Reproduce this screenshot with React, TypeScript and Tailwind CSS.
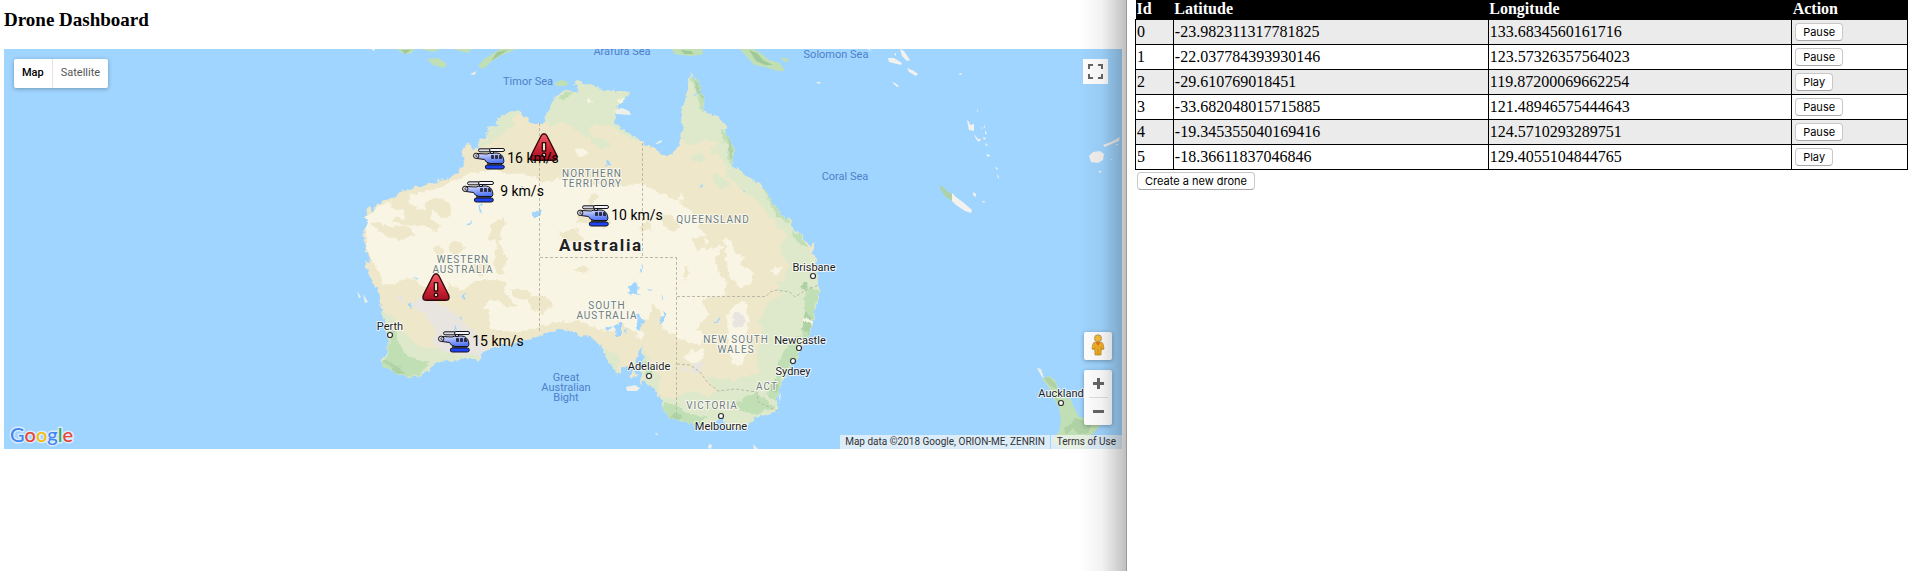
import React from "react";

const LAND =
  "M367 250L363 237L365 229L367 222L366 213L370 206L372 212L377 205L387 200L400 192L418 187L430 183L447 179L457 173L465 163L462 155L464 147L469 142L472 148L477 150L479 145L478 140L487 137L488 128L498 125L497 120L507 113L515 110L522 113L530 122L535 123L545 123L545 118L550 108L553 103L558 95L567 90L579 92L574 82L580 81L587 84L600 88L613 92L625 90L629 93L623 101L618 105L617 115L613 122L627 132L643 143L655 148L665 155L672 155L677 148L681 138L683 127L682 112L684 100L688 90L688 82L692 74L697 80L700 88L704 100L706 112L708 116L715 115L722 120L725 124L727 135L733 147L734 157L733 166L743 173L753 180L763 187L767 193L773 203L780 212L788 220L793 228L803 237L811 246L815 242L813 252L816 262L817 273L819 285L819 297L815 310L812 327L807 337L802 347L795 360L788 373L780 383L778 397L778 411L767 414L753 418L747 426L737 429L725 427L720 422L713 423L707 431L693 424L680 421L670 418L663 412L662 400L655 390L648 383L643 380L640 385L641 373L644 357L641 345L638 357L633 366L638 376L630 379L633 368L622 367L617 375L612 365L605 355L600 345L590 337L580 336L577 333L563 329L550 332L537 337L517 343L493 348L483 352L478 360L463 360L450 361L437 362L430 368L420 375L410 377L397 374L382 365L382 358L387 355L388 343L385 327L382 313L378 293L370 277L364 262L371 263Z";

type Patch = { fill: string; d: string };

const PATCHES: Patch[] = [
  { fill: "#f9f5e5", d: "M366 246L366 216L380 206L405 196L440 188L466 174L493 169L505 173L525 174L545 183L556 179L575 178L593 184L623 187L640 183L657 192L675 200L690 210L700 227L708 240L705 250L723 246L715 260L720 275L727 283L724 295L713 320L706 332L700 345L690 342L677 337L663 330L657 310L650 315L642 340L627 333L600 330L580 320L555 323L530 329L510 333L492 328L488 310L477 303L450 300L432 290L417 282L407 277L393 284L384 285L373 262Z" },
  { fill: "#f9f5e5", d: "M576 147L584 149L588 153L582 157L577 155ZM676 198L681 193L684 198L678 202ZM724 240L728 237L733 245L736 259L744 267L754 272L752 284L740 287L729 275ZM727 314L740 300L748 305L749 321L745 335L748 350L742 365L732 364L728 347ZM703 262L709 255L716 262L713 270ZM693 350L704 350L702 360L690 365L684 357Z" },
  { fill: "#efe7c9", d: "M389 204L400 195L412 195L407 201L415 207L427 209L424 202L436 198L448 200L452 207L451 216L442 218L433 210L430 219L441 226L437 232L424 225L411 227L399 223L390 220L399 217L405 219L404 211L394 210ZM490 224L498 219L507 221L502 231L499 243L489 238ZM452 241L460 243L465 249L458 254L448 250ZM495 240L504 249L507 260L502 268L505 273L499 275L493 264L496 254ZM370 223L378 222L393 228L404 226L416 233L402 240L386 236L376 229Z" },
  { fill: "#efe7c9", d: "M432 248L440 244L445 252L437 257ZM448 283L462 290L475 282L490 279L507 282L503 290L508 298L518 305L508 309L499 300L489 302L478 309L467 302L456 304L447 297ZM472 266L482 262L490 265L487 273L477 276ZM510 291L524 288L533 295L526 300L515 298ZM528 298L546 295L553 306L544 314L531 309ZM574 323L600 333L630 339L615 337L590 326ZM588 198L595 193L598 197L592 203L601 209L592 212L584 208L579 213L577 222L591 224L604 227L612 223L601 216ZM560 233L576 229L585 239L574 243L563 240Z" },
  { fill: "#efe7c9", d: "M640 322L649 318L652 305L659 308L661 322L663 338L672 345L668 360L659 372L646 360L645 342ZM683 276L686 265L689 272L686 281ZM692 238L704 236L706 246L697 252ZM641 225L650 221L652 229L643 232ZM618 322L637 332L635 346L625 341ZM661 214L672 217L680 227L674 233L664 225ZM700 300L723 295L718 320L706 337L697 328L709 315ZM573 270L583 265L590 269L584 274Z" },
  { fill: "#e8e4e0", d: "M398 297L403 295L404 302L400 303ZM413 303L423 297L434 299L438 305L447 308L457 315L464 325L474 330L484 344L490 352L478 359L466 354L451 355L440 349L432 340L437 331L428 321L424 313L414 309ZM731 315L740 311L745 317L744 328L734 326ZM692 365L703 362L702 371L693 373ZM680 367L688 368L685 373Z" },
  { fill: "#dee9cb", d: "M545 123L545 90L574 78L632 86L633 101L614 111L619 123L632 135L643 143L630 139L612 127L598 125L588 127L593 135L587 138L574 129L562 121L552 126ZM487 140L484 130L508 108L521 111L513 119L514 126L500 136L489 141ZM590 137L605 138L611 147L601 149L593 144ZM470 151L479 143L490 138L491 144L480 147Z" },
  { fill: "#dee9cb", d: "M682 139L681 80L695 70L705 112L722 118L731 150L737 175L725 164L716 150L718 143L704 139L692 146L684 143ZM723 169L740 170L755 181L763 190L776 206L788 221L806 237L821 285L812 330L790 370L780 410L760 414L741 400L714 389L706 376L720 380L740 379L759 372L757 352L763 334L758 320L766 307L775 299L788 293L785 278L789 266L780 248L786 235L768 215L758 202L745 192L735 184ZM661 397L676 398L690 390L710 396L716 390L740 397L770 394L780 412L750 430L700 432L665 420ZM640 353L646 352L652 365L660 378L657 392L643 379ZM601 347L612 353L620 357L617 374L608 363ZM381 311L391 314L399 327L410 338L420 349L437 348L451 355L478 354L480 359L451 363L427 374L400 379L378 369L390 345Z" },
  { fill: "#dee9cb", d: "M712 174L724 177L731 185L721 190L714 183ZM691 157L702 153L706 159L697 163ZM767 303L778 297L778 307ZM776 282L788 279L790 291L778 294ZM710 148L719 151L713 157Z" },
  { fill: "#c0dfb4", d: "M389 330L397 331L400 348L410 357L430 362L419 375L399 378L381 365L388 356ZM690 76L697 76L704 96L705 112L700 107L697 94ZM721 128L730 137L734 151L733 165L727 160L728 145L722 140ZM761 184L769 190L774 205L784 211L789 225L779 216L773 208ZM791 231L800 235L810 248L802 245L795 239ZM804 295L810 287L819 291L814 312L811 329L805 339L801 334L806 319ZM789 341L801 336L796 359L781 380L777 401L767 397L771 383L781 376L779 361ZM665 401L678 405L683 412L706 417L700 428L669 420L661 407ZM735 403L745 398L757 392L768 401L776 408L755 414L741 411ZM557 100L565 93L575 90L565 99ZM643 361L650 366L653 379L647 377Z" },
  { fill: "#aed2a5", d: "M727 137L731 145L733 161L730 158ZM804 310L812 317L808 335L803 328ZM769 387L777 379L777 391L772 392ZM384 360L397 365L405 374L396 373ZM694 78L701 90L703 102L697 90ZM801 285L808 281L807 292ZM676 411L682 415L680 420L672 418Z" },
  { fill: "#f9f5e5", d: "M616 100L624 98L628 106L619 107ZM585 101L590 98L592 102L588 105ZM803 317L814 322L811 325L804 320ZM735 254L743 255L740 262L735 260ZM770 270L782 265L783 269L774 275Z" },
];

const LAKES =
  "M630 284L634 281L638 285L637 293L640 296L630 294L629 289ZM636 315L640 313L643 325L641 332L637 328ZM660 317L665 312L665 320L661 324ZM614 327L621 323L621 338L616 335ZM605 328L612 326L608 331ZM623 330L628 329L626 334ZM713 323L722 316L716 323ZM532 214L541 209L541 216L535 216ZM604 167L609 160L610 167ZM462 297L466 294L466 300ZM458 317L462 316L460 320ZM480 204L482 210L480 214L479 208ZM467 223L470 221L469 226ZM408 303L411 301L410 310L408 309ZM412 278L417 279L416 281ZM455 325L458 329L454 330ZM641 264L643 268L641 272ZM649 291L653 289L651 292ZM699 186L702 183L701 188ZM661 297L663 298L663 301ZM520 184L523 186L520 187ZM563 240L565 242L563 243ZM716 420L723 418L725 424L718 425ZM694 94L697 94L695 96ZM744 190L746 192L743 192Z";

const ISLANDS: Patch[] = [
  { fill: "#c0dfb4", d: "M397 49L415 49L410 54L402 53ZM420 49L440 49L433 52ZM427 59L438 58L447 64L444 68L433 65ZM478 66L484 59L497 51L500 49L517 49L500 56L491 62L483 69ZM554 83L562 80L568 82L566 86L557 86ZM671 49L702 49L703 54L693 56L680 55L675 54Z" },
  { fill: "#c0dfb4", d: "M740 49L754 49L762 54L769 60L780 63L785 71L777 71L765 67L754 65L748 58ZM452 49L472 49L468 53ZM781 57L789 59L788 62L783 61Z" },
  { fill: "#9fc998", d: "M749 50L757 53L763 60L773 65L765 65L756 61ZM401 50L411 50L405 54ZM497 52L508 50L491 61ZM681 50L691 51L694 54L684 54Z" },
  { fill: "#eef0e8", d: "M470 74L477 71L474 75ZM615 110L622 108L629 111L631 115L616 114ZM655 144L661 140L662 142L657 144ZM357 291L361 297L359 298ZM363 294L368 302L365 303ZM371 49L375 49L374 51ZM384 205L386 203L387 204ZM626 387L635 385L640 388L637 391L627 391ZM709 444L712 445L711 449L708 448ZM753 444L758 449L754 449ZM816 82L821 82L819 84ZM655 433L659 434L656 435ZM779 397L781 392L780 402Z" },
  { fill: "#f3f2ef", d: "M888 58L894 58L902 63L901 65L889 62ZM900 49L904 51L910 60L907 61L902 56ZM907 68L914 71L918 74L916 76L909 72ZM892 82L895 83L899 86L897 87ZM958 74L962 73L961 75ZM967 120L969 122L970 125L974 124L974 131L969 130ZM974 134L978 139L981 139L979 142L976 139ZM984 124L985 128L984 128ZM985 130L987 134L985 134ZM983 137L986 138L984 140ZM985 143L988 145L986 146ZM986 154L990 155L989 157L987 156ZM995 167L998 168L997 170ZM997 174L999 177L998 179ZM973 192L976 194L976 197L973 195ZM982 201L985 201L984 203ZM977 109L978 111L977 112ZM981 128L983 127L982 129ZM869 49L872 51L868 50ZM894 54L896 53L896 56Z" },
  { fill: "#f3f2ef", d: "M952 193L956 197L964 203L972 210L971 213L965 211L956 205L951 200ZM1089 156L1093 152L1100 151L1104 154L1103 160L1098 163L1091 162ZM1103 145L1111 142L1120 137L1119 141L1109 145L1105 147ZM1116 144L1118 144L1117 146ZM1111 159L1113 160L1111 160ZM1098 171L1102 171L1100 173Z" },
  { fill: "#aed2a5", d: "M939 185L943 187L948 192L952 194L952 201L946 197L942 192Z" },
  { fill: "#eef0e8", d: "M1037 368L1041 369L1044 378L1042 377Z" },
  { fill: "#c0dfb4", d: "M1042 379L1049 376L1056 381L1059 392L1065 398L1070 400L1075 409L1079 417L1084 418L1100 421L1101 425L1090 437L1086 449L1062 449L1051 441L1059 432L1061 420L1059 408L1053 397L1047 385ZM1067 398L1071 399L1074 410L1070 406Z" },
  { fill: "#aed2a5", d: "M1044 378L1049 377L1056 384L1057 389L1050 386ZM1075 418L1092 423L1088 433L1078 434L1073 428L1066 435L1064 428L1071 424ZM1052 393L1062 404L1058 403Z" },
];

const BORDERS =
  "M539.5 123V331M642.5 143V257M540 257.5H676M676.5 257V418M677 296.5H766L770 292L777 290L790 292L795 297L806 290L819 285M677 364L690 365L700 372L708 383L718 391L735 389L757 392L758 402L777 411";

const REGIONS = [
  { lines: ["NORTHERN", "TERRITORY"], x: 592, y: 177 },
  { lines: ["WESTERN", "AUSTRALIA"], x: 463, y: 263 },
  { lines: ["QUEENSLAND"], x: 713, y: 223 },
  { lines: ["SOUTH", "AUSTRALIA"], x: 607, y: 309 },
  { lines: ["NEW SOUTH", "WALES"], x: 736, y: 343 },
  { lines: ["ACT"], x: 767, y: 390 },
  { lines: ["VICTORIA"], x: 712, y: 409 },
];

const SEAS = [
  { lines: ["Timor Sea"], x: 528, y: 85 },
  { lines: ["Arafura Sea"], x: 622, y: 55 },
  { lines: ["Solomon Sea"], x: 836, y: 58 },
  { lines: ["Coral Sea"], x: 845, y: 180 },
  { lines: ["Great", "Australian", "Bight"], x: 566, y: 381 },
];

const CITIES = [
  { name: "Perth", x: 390, y: 330, cx: 390, cy: 335 },
  { name: "Adelaide", x: 649, y: 370, cx: 649, cy: 376 },
  { name: "Melbourne", x: 721, y: 430, cx: 721, cy: 416 },
  { name: "Brisbane", x: 814, y: 271, cx: 813, cy: 276 },
  { name: "Newcastle", x: 800, y: 344, cx: 799, cy: 348 },
  { name: "Sydney", x: 793, y: 375, cx: 793, cy: 361 },
  { name: "Auckland", x: 1061, y: 397, cx: 1061, cy: 403 },
];

const ALERTS = [
  { x: 530, y: 133 },
  { x: 422, y: 273 },
];

const HELICOPTERS = [
  { x: 473, y: 148, speed: "16 km/s", tx: 533 },
  { x: 462, y: 181, speed: "9 km/s", tx: 522 },
  { x: 577, y: 205, speed: "10 km/s", tx: 637 },
  { x: 438, y: 331, speed: "15 km/s", tx: 498 },
];

const DRONES = [
  { id: 0, lat: "-23.982311317781825", lng: "133.6834560161716", action: "Pause" },
  { id: 1, lat: "-22.037784393930146", lng: "123.57326357564023", action: "Pause" },
  { id: 2, lat: "-29.610769018451", lng: "119.87200069662254", action: "Play" },
  { id: 3, lat: "-33.682048015715885", lng: "121.48946575444643", action: "Pause" },
  { id: 4, lat: "-19.345355040169416", lng: "124.5710293289751", action: "Pause" },
  { id: 5, lat: "-18.36611837046846", lng: "129.4055104844765", action: "Play" },
];

function Helicopter({ x, y }: { x: number; y: number }) {
  return (
    <g transform={`translate(${x} ${y})`} stroke="#15151c" strokeWidth="1" strokeLinejoin="round">
      <path d="M4 5.5L14 6L17 5H24Q29 5.5 30.5 10.5Q31.5 14 30 15.5H17Q12.5 14.5 11.5 11.5L4 10.5Z" fill="url(#heli-body)" />
      <rect x="17.5" y="2.5" width="3" height="3" fill="#c9cbd6" />
      <rect x="5.5" y="0.8" width="12" height="3" rx="1.5" fill="#dcdde4" />
      <rect x="16.5" y="0.5" width="15" height="3" rx="1.5" fill="#f6f6f9" />
      <circle cx="3.2" cy="7.8" r="2.7" fill="#dcdde4" />
      <path d="M4.6 6.6Q3 6.4 2.8 7.8Q3 9.2 4.6 9" fill="none" strokeWidth="0.8" />
      <path d="M18.5 7.5H20.5V10.5H18.5ZM22.5 7.5H24.5V10.5H22.5ZM26.5 7.5H28L28.8 10.5H26.5Z" fill="#2a2c4a" strokeWidth="0.7" />
      <path d="M14 16H29" strokeWidth="1.4" />
      <rect x="12.3" y="17" width="19" height="4" rx="2" fill="#1d43f2" />
    </g>
  );
}

function Alert({ x, y }: { x: number; y: number }) {
  return (
    <g transform={`translate(${x} ${y})`}>
      <path
        d="M14 0.8Q15.8 0.8 17 3L26.6 22Q28.4 27.3 24 27.3H4Q-0.4 27.3 1.4 22L11 3Q12.2 0.8 14 0.8Z"
        fill="url(#alert-fill)"
        stroke="#33080c"
        strokeWidth="1.4"
      />
      <rect x="12.3" y="9.7" width="3.4" height="8.2" fill="#f3dcc8" stroke="#1c0505" strokeWidth="1.2" />
      <circle cx="14" cy="22" r="1.8" fill="#f3dcc8" stroke="#1c0505" strokeWidth="1.2" />
    </g>
  );
}

function MapDrawing() {
  return (
    <svg
      viewBox="4 49 1118 400"
      preserveAspectRatio="xMidYMid slice"
      className="block h-full w-full bg-[#a0d5ff] font-['Roboto',sans-serif]"
      role="img"
      aria-label="Map of Australia with drone positions"
    >
      <defs>
        <clipPath id="land-clip">
          <path d={LAND} />
        </clipPath>
        <filter id="rugged" x="-2%" y="-2%" width="104%" height="104%" colorInterpolationFilters="sRGB">
          <feTurbulence type="fractalNoise" baseFrequency="0.16" numOctaves="3" seed="7" result="noise" />
          <feDisplacementMap in="SourceGraphic" in2="noise" scale="7" xChannelSelector="R" yChannelSelector="G" />
        </filter>
        <linearGradient id="heli-body" x1="0.1" y1="0" x2="0.4" y2="1">
          <stop offset="0" stopColor="#dfe3fb" />
          <stop offset="0.5" stopColor="#94a8f8" />
          <stop offset="1" stopColor="#5274f4" />
        </linearGradient>
        <linearGradient id="alert-fill" x1="0" y1="0" x2="0" y2="1">
          <stop offset="0" stopColor="#f4606a" />
          <stop offset="0.5" stopColor="#d3293a" />
          <stop offset="1" stopColor="#a30f22" />
        </linearGradient>
      </defs>

      <g filter="url(#rugged)">
        <path d={LAND} fill="#efe7c9" />
        <g clipPath="url(#land-clip)">
          {PATCHES.map((p, i) => (
            <path key={i} d={p.d} fill={p.fill} />
          ))}
        </g>
        <path d={LAKES} fill="#a0d5ff" />
      </g>
      {ISLANDS.map((p, i) => (
        <path key={i} d={p.d} fill={p.fill} />
      ))}
      <path d={BORDERS} fill="none" stroke="#bcb9aa" strokeWidth="1" strokeDasharray="3 2" />

      <g textAnchor="middle" className="text-[11px]" fill="#4f7fc8">
        {SEAS.map((s) =>
          s.lines.map((line, i) => (
            <text key={line} x={s.x} y={s.y + i * 10}>
              {line}
            </text>
          )),
        )}
      </g>
      <g
        textAnchor="middle"
        className="text-[10px] tracking-widest"
        fill="#6b7c80"
        stroke="#fbf9ef"
        strokeWidth="2"
        strokeLinejoin="round"
        paintOrder="stroke"
      >
        {REGIONS.map((r) =>
          r.lines.map((line, i) => (
            <text key={r.x + line} x={r.x} y={r.y + i * 10}>
              {line}
            </text>
          )),
        )}
      </g>
      <text
        x="601"
        y="251"
        textAnchor="middle"
        className="text-[17px] font-bold tracking-widest"
        fill="#222"
        stroke="#fbf9ef"
        strokeWidth="2"
        paintOrder="stroke"
      >
        Australia
      </text>
      {CITIES.map((c) => (
        <g key={c.name}>
          <circle cx={c.cx} cy={c.cy} r="2.5" fill="#fff" stroke="#333" strokeWidth="1.2" />
          <text
            x={c.x}
            y={c.y}
            textAnchor="middle"
            className="text-[11px]"
            fill="#1d1d1d"
            stroke="#fff"
            strokeOpacity="0.75"
            strokeWidth="2"
            strokeLinejoin="round"
            paintOrder="stroke"
          >
            {c.name}
          </text>
        </g>
      ))}

      {ALERTS.map((a) => (
        <Alert key={a.x} {...a} />
      ))}
      {HELICOPTERS.map((h) => (
        <g key={h.x}>
          <Helicopter x={h.x} y={h.y} />
          <text x={h.tx} y={h.y + 15} textAnchor="middle" className="text-[14px]" fill="#000">
            {h.speed}
          </text>
        </g>
      ))}
    </svg>
  );
}

function Pegman() {
  return (
    <svg width="14" height="22" viewBox="0 0 14 22" aria-hidden="true">
      <path
        d="M3.5 8.2H10.5Q12 8.5 12.3 11L13 15L11 15.6L10.3 13.5L10 21H4L3.7 13.5L3 15.6L1 15L1.7 11Q2 8.5 3.5 8.2Z"
        fill="#f5b125"
        stroke="#b48328"
        strokeWidth="0.7"
      />
      <path d="M4.5 8.2H9.5L7 12Z" fill="#e2701c" />
      <path d="M7 14.5V21" stroke="#c58a1c" strokeWidth="0.8" />
      <circle cx="7" cy="4.3" r="3.5" fill="#f9bd35" stroke="#a98a50" strokeWidth="0.8" />
    </svg>
  );
}

function MapPanel() {
  return (
    <div className="relative mx-1 h-[400px] overflow-hidden">
      <MapDrawing />

      <div className="absolute left-2.5 top-2.5 flex h-[29px] overflow-hidden rounded-xs bg-white font-['Roboto',sans-serif] text-[11px] shadow-[0_1px_4px_rgba(0,0,0,0.3)]">
        <button type="button" className="border-r border-[#e4e4e4] px-2 font-medium text-black">
          Map
        </button>
        <button type="button" className="px-2 text-[#565656]">
          Satellite
        </button>
      </div>

      <button
        type="button"
        aria-label="Toggle fullscreen"
        className="absolute right-3.5 top-2.5 flex size-[25px] items-center justify-center bg-white"
      >
        <svg width="15" height="15" viewBox="0 0 15 15" fill="none" stroke="#666" strokeWidth="2" aria-hidden="true">
          <path d="M1 5V1H5M10 1H14V5M14 10V14H10M5 14H1V10" />
        </svg>
      </button>

      <div className="absolute bottom-6 right-2.5 flex flex-col gap-2.5">
        <button
          type="button"
          aria-label="Street View"
          className="flex size-7 items-start justify-center rounded-xs bg-white pt-0.5 shadow-[0_1px_4px_rgba(0,0,0,0.3)]"
        >
          <Pegman />
        </button>
        <div className="flex w-7 flex-col items-center rounded-xs bg-white shadow-[0_1px_4px_rgba(0,0,0,0.3)]">
          <button type="button" aria-label="Zoom in" className="flex h-[27px] w-7 items-center justify-center">
            <svg width="11" height="11" viewBox="0 0 11 11" stroke="#666" strokeWidth="3" aria-hidden="true">
              <path d="M5.5 0V11M0 5.5H11" />
            </svg>
          </button>
          <div className="h-px w-[19px] bg-[#e0e0e0]" />
          <button type="button" aria-label="Zoom out" className="flex h-[27px] w-7 items-center justify-center">
            <svg width="11" height="11" viewBox="0 0 11 11" stroke="#666" strokeWidth="3" aria-hidden="true">
              <path d="M0 5.5H11" />
            </svg>
          </button>
        </div>
      </div>

      <svg
        width="80"
        height="28"
        className="absolute bottom-0 left-1 font-['Lato',sans-serif] text-[20px] font-medium"
        role="img"
        aria-label="Google"
      >
        <text x="2" y="21" stroke="#d9ecfb" strokeWidth="3" strokeLinejoin="round" paintOrder="stroke">
          <tspan fill="#4285f4">G</tspan>
          <tspan fill="#ea4335">o</tspan>
          <tspan fill="#fbbc05">o</tspan>
          <tspan fill="#4285f4">g</tspan>
          <tspan fill="#34a853">l</tspan>
          <tspan fill="#ea4335">e</tspan>
        </text>
      </svg>

      <div className="absolute bottom-0 right-0 flex h-3.5 gap-px font-['Roboto',sans-serif] text-[10px] leading-[14px] text-[#333]">
        <span className="bg-[#f5f5f5]/70 px-[5px]">Map data ©2018 Google, ORION-ME, ZENRIN</span>
        <a href="#terms" className="bg-[#f5f5f5]/70 px-1.5">
          Terms of Use
        </a>
      </div>
    </div>
  );
}

function PushButton({ children }: { children: React.ReactNode }) {
  return (
    <button
      type="button"
      className="block h-[18px] rounded-sm border border-[#c8c8c8] border-b-[#a9a9a9] bg-white px-[7px] font-['Inter',sans-serif] text-[11px] leading-4 text-black"
    >
      {children}
    </button>
  );
}

export default function App() {
  return (
    <div className="grid min-h-screen grid-cols-[1127fr_787fr] bg-white font-['Liberation_Serif',serif] text-black">
      <section className="relative border-r border-[#999]">
        <h1 className="flex h-[49px] items-start px-1 pt-2 text-[19px] leading-6 font-bold">Drone Dashboard</h1>
        <MapPanel />
        <div className="pointer-events-none absolute inset-y-0 right-0 w-12 bg-linear-to-r from-transparent via-black/5 to-black/25" />
      </section>

      <section className="pr-1.5 pl-2">
        <table className="w-full table-fixed border-collapse text-[16px] leading-[18px]">
          <thead>
            <tr className="h-[19px] bg-black text-left text-white">
              <th className="w-[4.9%] px-px pt-0 pb-0.5 leading-[17px]">Id</th>
              <th className="w-[40.8%] px-px pt-0 pb-0.5 leading-[17px]">Latitude</th>
              <th className="w-[39.3%] px-px pt-0 pb-0.5 leading-[17px]">Longitude</th>
              <th className="w-[15%] px-px pt-0 pb-0.5 leading-[17px]">Action</th>
            </tr>
          </thead>
          <tbody>
            {DRONES.map((d) => (
              <tr key={d.id} className="h-[25px] odd:bg-[#ebebeb]">
                <td className="border border-black px-px py-0">{d.id}</td>
                <td className="border border-black px-px py-0">{d.lat}</td>
                <td className="border border-black px-px py-0">{d.lng}</td>
                <td className="border border-black px-[3px] py-0">
                  <PushButton>{d.action}</PushButton>
                </td>
              </tr>
            ))}
          </tbody>
        </table>
        <div className="px-0.5 pt-0.5">
          <PushButton>Create a new drone</PushButton>
        </div>
      </section>
    </div>
  );
}
